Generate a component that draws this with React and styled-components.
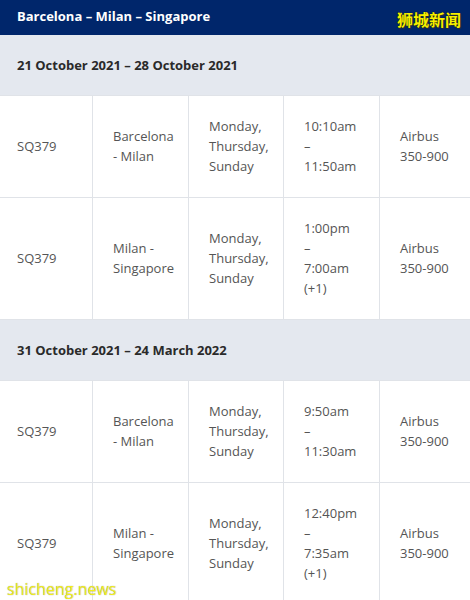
import React from "react";
import styled, { createGlobalStyle } from "styled-components";

const Global = createGlobalStyle`
  html, body { margin: 0; padding: 0; background: #fff; }
  body { font-family: "Open Sans", "Liberation Sans", sans-serif; }
`;

const Page = styled.div`
  position: relative;
  width: 470px;
  height: 600px;
  overflow: hidden;
  background: #fff;
`;

const Title = styled.div`
  background: #00266b;
  color: #fff;
  font-weight: 700;
  font-size: 13px;
  line-height: 20px;
  padding: 6px 17px 9px;
`;

const Section = styled.div`
  background: #e4e8ef;
  color: #2a2a2a;
  font-weight: 700;
  font-size: 13px;
  line-height: 20px;
  padding: 20px 17px;
  border-bottom: 1px solid #e0e3e8;
`;

const Row = styled.div`
  display: grid;
  grid-template-columns: 92px 96px 95px 96px 1fr;
  border-bottom: 1px solid #e0e3e8;
`;

const Cell = styled.div`
  display: flex;
  align-items: center;
  padding: 20px 8px 21px ${(p) => (p.$first ? "17px" : "20px")};
  border-left: ${(p) => (p.$first ? "none" : "1px solid #e0e3e8")};
  color: #555;
  font-size: 13px;
  line-height: 20px;
`;

const WaterCn = styled.div`
  position: absolute;
  top: 9px;
  right: 9px;
  font-family: "Noto Sans CJK SC", sans-serif;
  font-weight: 700;
  font-size: 16px;
  line-height: 20px;
  color: #f6f000;
  text-shadow: 0 0 1px #000, 1px 1px 1px #333;
`;

const WaterEn = styled.div`
  position: absolute;
  left: 7px;
  bottom: 1px;
  font-family: "Open Sans", sans-serif;
  font-size: 16px;
  line-height: 20px;
  color: #f2ee1c;
  text-shadow: 0 0 1px #888;
`;

const sections = [
  {
    title: "21 October 2021 – 28 October 2021",
    rows: [
      ["SQ379", ["Barcelona", "- Milan"], ["Monday,", "Thursday,", "Sunday"], ["10:10am", "–", "11:50am"], ["Airbus", "350-900"]],
      ["SQ379", ["Milan -", "Singapore"], ["Monday,", "Thursday,", "Sunday"], ["1:00pm", "–", "7:00am", "(+1)"], ["Airbus", "350-900"]],
    ],
  },
  {
    title: "31 October 2021 – 24 March 2022",
    rows: [
      ["SQ379", ["Barcelona", "- Milan"], ["Monday,", "Thursday,", "Sunday"], ["9:50am", "–", "11:30am"], ["Airbus", "350-900"]],
      ["SQ379", ["Milan -", "Singapore"], ["Monday,", "Thursday,", "Sunday"], ["12:40pm", "–", "7:35am", "(+1)"], ["Airbus", "350-900"]],
    ],
  },
];

const Lines = ({ lines }) => (
  <div>
    {(Array.isArray(lines) ? lines : [lines]).map((l, i) => (
      <div key={i}>{l}</div>
    ))}
  </div>
);

export default function App() {
  return (
    <Page>
      <Global />
      <Title>Barcelona – Milan – Singapore</Title>
      {sections.map((s) => (
        <React.Fragment key={s.title}>
          <Section>{s.title}</Section>
          {s.rows.map((r, i) => (
            <Row key={i}>
              {r.map((c, j) => (
                <Cell key={j} $first={j === 0}>
                  <Lines lines={c} />
                </Cell>
              ))}
            </Row>
          ))}
        </React.Fragment>
      ))}
      <WaterCn>狮城新闻</WaterCn>
      <WaterEn>shicheng.news</WaterEn>
    </Page>
  );
}
